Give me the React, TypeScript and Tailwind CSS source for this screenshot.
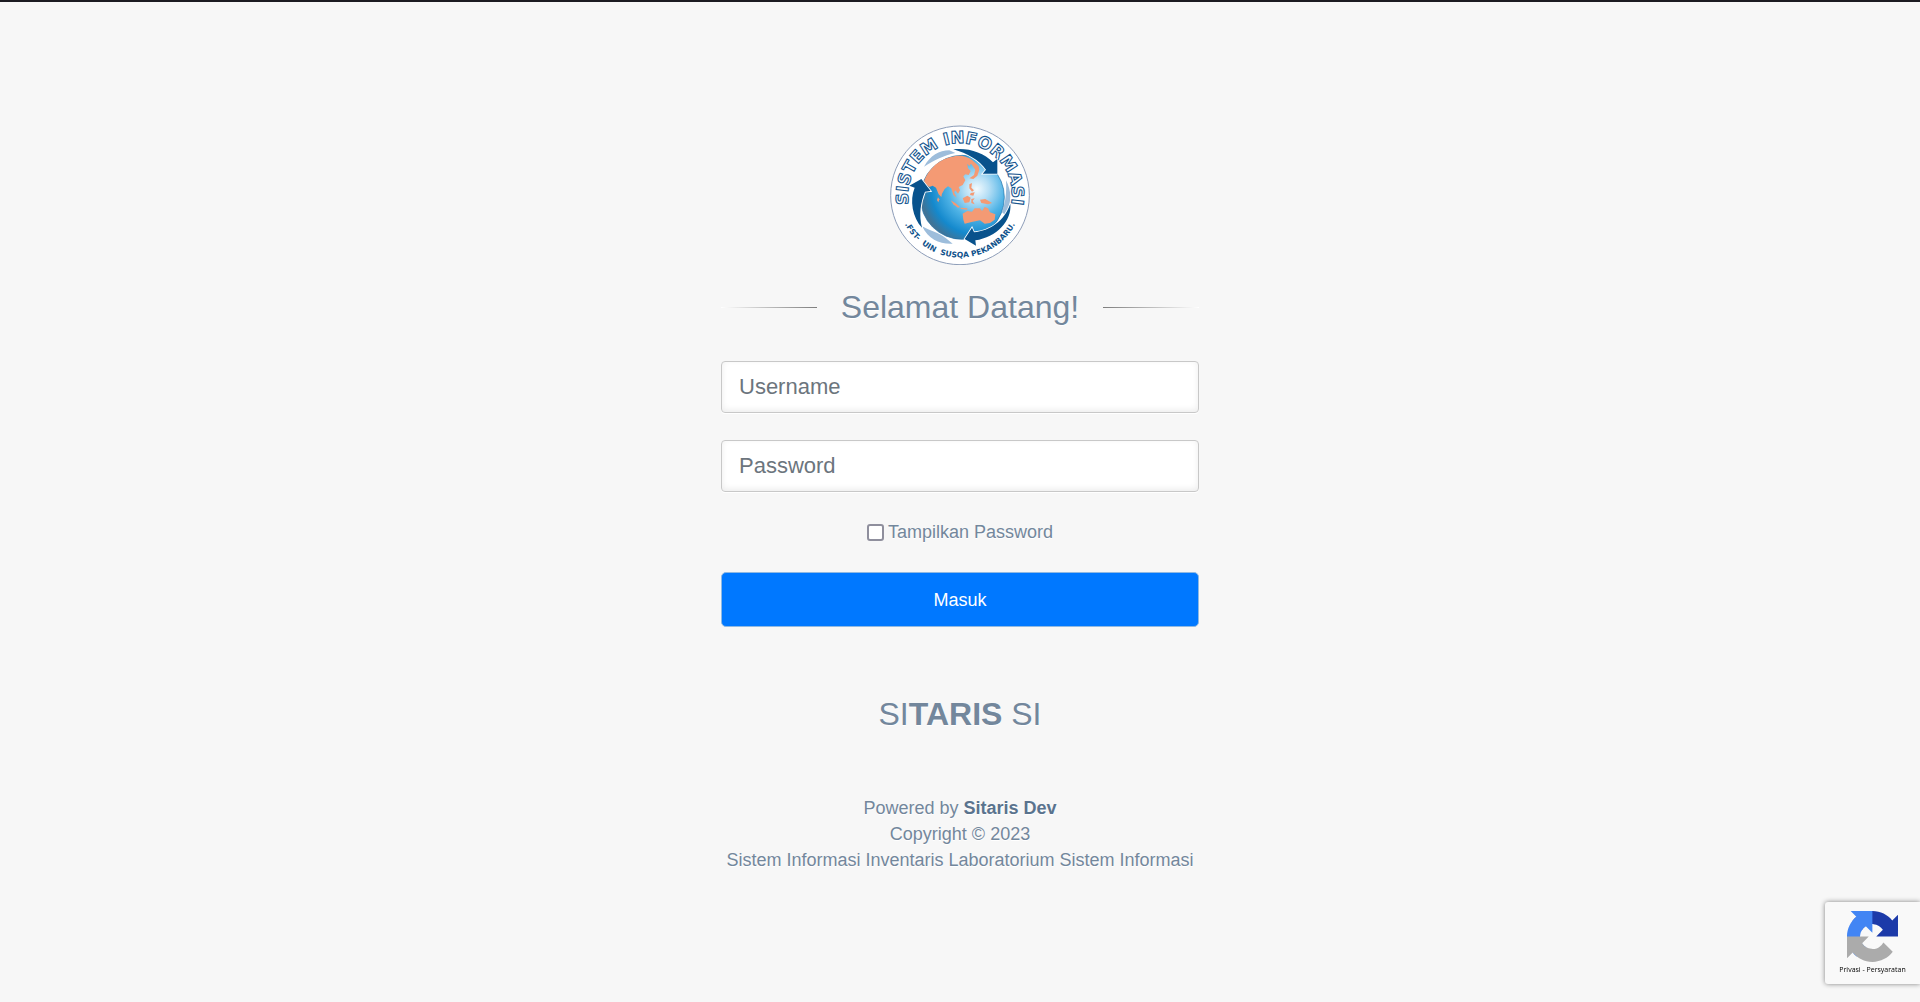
import { useState } from "react";

function DepartmentLogo() {
  return (
    <svg
      viewBox="30 30 420 420"
      role="img"
      aria-label="Sistem Informasi FST UIN Suska Pekanbaru"
      className="size-[140px]"
    >
      <defs>
        <radialGradient id="sea" gradientUnits="userSpaceOnUse" cx="290" cy="222" r="190">
          <stop offset="0" stopColor="#f2fafe" />
          <stop offset="0.2" stopColor="#b4def5" />
          <stop offset="0.45" stopColor="#4fb3e6" />
          <stop offset="0.72" stopColor="#1489cd" />
          <stop offset="0.88" stopColor="#3d7499" />
          <stop offset="1" stopColor="#5c6f80" />
        </radialGradient>
        <path id="arcTop" d="M105 319 A156 156 0 1 1 375 319" />
        <path id="arcBottom" d="M62 298 A187 187 0 0 0 418 298" />
      </defs>
      <circle cx="240" cy="241" r="208" fill="#fff" stroke="#8d9db8" strokeWidth="3" />

      <text
        fontFamily="'DejaVu Sans', sans-serif"
        fontWeight="bold"
        fontSize="50"
        fill="#fff"
        stroke="#15568f"
        strokeWidth="3.2"
      >
        <textPath href="#arcTop" startOffset="50%" textAnchor="middle">
          {"SISTEM\u00a0INFORMASI"}
        </textPath>
      </text>
      <text fontFamily="'DejaVu Sans', sans-serif" fontWeight="bold" fontSize="23" fill="#0f528b">
        <textPath href="#arcBottom" startOffset="50%" textAnchor="middle">
          {".FST-\u00a0\u00a0UIN\u00a0\u00a0SUSQA PEKANBARU."}
        </textPath>
      </text>

      <g fill="#9dbddb">
        <path d="M132 155 C150 122 178 106 208 106 L226 114 C190 122 165 134 132 155Z" />
        <path d="M378 196 C395 228 396 262 376 300 L366 292 C377 262 380 232 378 196Z" />
        <path d="M126 334 C150 348 176 352 198 370 L218 386 C180 388 146 374 126 334Z" />
      </g>

      <circle cx="247" cy="247" r="126" fill="url(#sea)" stroke="#1b6da6" strokeWidth="2" />

      <g fill="#f49a74">
        <path d="M132 198 C146 160 180 130 226 123 C252 120 268 127 283 141 L274 144 L268 154 L262 146 L264 160 L272 168 L266 180 L256 178 L250 184 L256 196 L248 210 L236 216 L240 226 L234 236 L226 226 L222 232 L230 248 L220 240 L214 220 L204 214 L194 222 L186 236 L184 246 L176 238 L168 218 L158 212 L148 216 L138 208Z" />
        <path d="M266 138 L284 142 L296 154 L298 164 L292 182 L280 192 L268 190 L282 180 L286 164 L276 150Z" />
        <path d="M248 296 L262 288 L276 290 L284 280 L300 280 L306 288 L314 276 L324 280 L330 292 L346 298 L344 314 L330 324 L314 326 L300 316 L278 320 L254 326 L250 314Z" />
        <path d="M212 256 L226 264 L240 276 L234 278 L220 268Z" />
        <path d="M248 250 L262 242 L272 248 L268 262 L254 264Z" />
        <path d="M274 252 L284 250 L278 258 L284 268 L274 264Z" />
        <path d="M300 254 L316 252 L336 264 L324 268 L304 264Z" />
        <path d="M240 278 L262 280 L262 284 L244 282Z" />
        <path d="M268 208 L276 204 L274 218 L282 226 L276 230 L268 220Z" />
        <path d="M272 234 L284 232 L280 242 L270 240Z" />
        <path d="M174 247 L178 253 L175 262 L171 255Z" />
      </g>

      <g fill="#08528c" stroke="#fff" strokeWidth="5" paintOrder="stroke">
        <path d="M220 103 C265 98 310 112 339 142 L352 132 L352 176 L308 176 L318 164 C298 136 262 115 220 103Z" />
        <path d="M124 192 L152 228 L135 230 C122 262 116 298 126 338 C98 308 88 256 104 218 L88 212Z" />
        <path d="M391 266 C396 318 350 366 286 376 L288 392 L254 372 L276 338 L282 352 C330 346 372 320 391 266Z" />
      </g>
    </svg>
  );
}

function CaptchaLogo() {
  return (
    <svg viewBox="0 0 64 64" className="size-[51px]" aria-hidden="true">
      <path
        fill="#1c3aa9"
        d="M64 31.955l-.033-1.37V4.687l-7.16 7.16C50.948 4.674 42.033.093 32.05.093c-10.4 0-19.622 4.96-25.458 12.64l11.736 11.86a15.55 15.55 0 0 1 4.754-5.334c2.05-1.6 4.952-2.906 8.968-2.906.485 0 .86.057 1.135.163 4.976.393 9.288 3.14 11.828 7.124l-8.307 8.307L64 31.953"
      />
      <path
        fill="#4285f4"
        d="M31.862.094l-1.37.033H4.594l7.16 7.16C4.58 13.147 0 22.06 0 32.046c0 10.4 4.96 19.622 12.64 25.458L24.5 45.768a15.55 15.55 0 0 1-5.334-4.754c-1.6-2.05-2.906-4.952-2.906-8.968 0-.485.057-.86.163-1.135.393-4.976 3.14-9.288 7.124-11.828l8.307 8.307L31.86.095"
      />
      <path
        fill="#ababab"
        d="M.001 32.045l.033 1.37v25.898l7.16-7.16c5.86 7.173 14.774 11.754 24.76 11.754 10.4 0 19.622-4.96 25.458-12.64l-11.736-11.86a15.55 15.55 0 0 1-4.754 5.334c-2.05 1.6-4.952 2.906-8.968 2.906-.485 0-.86-.057-1.135-.163-4.976-.393-9.288-3.14-11.828-7.124l8.307-8.307c-10.522.04-22.4.066-27.295-.005"
      />
    </svg>
  );
}

const fieldClass =
  "h-[52px] w-full rounded-[4px] border border-[#c8c8c8] bg-white px-[17px] text-[22px] text-[#495057] placeholder:text-[#6c757d] shadow-[0_1px_0_#fff,inset_0_-2px_6px_rgba(0,0,0,0.08)] outline-none focus:border-[#80bdff]";

export default function App() {
  const [showPassword, setShowPassword] = useState(false);

  return (
    <div className="min-h-screen border-t-2 border-[#1c1b22] bg-[#f7f7f7] font-['Liberation_Sans',Arial,sans-serif] text-lg/[26px] text-[#73879c] [text-shadow:0_1px_0_#fff]">
      <main className="mx-auto flex w-full max-w-[478px] flex-col pt-[123px] pb-16 text-center">
        <div className="flex justify-center">
          <DepartmentLogo />
        </div>

        <form onSubmit={(event) => event.preventDefault()} className="mt-5">
          <div className="flex items-center justify-between">
            <span className="h-px w-24 bg-linear-to-l from-[#7e7e7e] to-white" />
            <h1 className="text-[32px]/[44px]">Selamat Datang!</h1>
            <span className="h-px w-24 bg-linear-to-r from-[#7e7e7e] to-white" />
          </div>

          <div className="mt-8 flex flex-col gap-[27px]">
            <input type="text" aria-label="Username" placeholder="Username" className={fieldClass} />
            <input
              type={showPassword ? "text" : "password"}
              aria-label="Password"
              placeholder="Password"
              className={fieldClass}
            />
          </div>

          <label className="mt-[27px] flex items-center justify-center gap-1">
            <input
              type="checkbox"
              checked={showPassword}
              onChange={(event) => setShowPassword(event.target.checked)}
              className="size-[17px] appearance-none rounded-[3px] border-2 border-[#8f8f9d] bg-white checked:bg-[#0078ff]"
            />
            Tampilkan Password
          </label>

          <button
            type="submit"
            className="mt-[27px] h-[55px] w-full rounded-[5px] border border-[#8fb9e3] bg-[#0078ff] text-white [text-shadow:none]"
          >
            Masuk
          </button>
        </form>

        <h2 className="mt-[65px] text-[32px]/[44px]">
          SI<strong>TARIS</strong> SI
        </h2>

        <footer className="mt-[59px]">
          <p>
            Powered by{" "}
            <a href="#" className="font-bold text-[#5a738e]">
              Sitaris Dev
            </a>
          </p>
          <p>Copyright © 2023</p>
          <p>Sistem Informasi Inventaris Laboratorium Sistem Informasi</p>
        </footer>
      </main>

      <aside className="fixed right-0 bottom-[18px] flex h-[82px] w-[95px] flex-col items-center rounded-l-[3px] bg-[#f9f9f9] pt-[9px] shadow-[0_0_5px_gray]">
        <CaptchaLogo />
        <p className="mt-[3px] font-['Open_Sans',sans-serif] text-[7px]/[10px] whitespace-nowrap text-black [text-shadow:none]">
          <a href="#">Privasi</a> - <a href="#">Persyaratan</a>
        </p>
      </aside>
    </div>
  );
}
